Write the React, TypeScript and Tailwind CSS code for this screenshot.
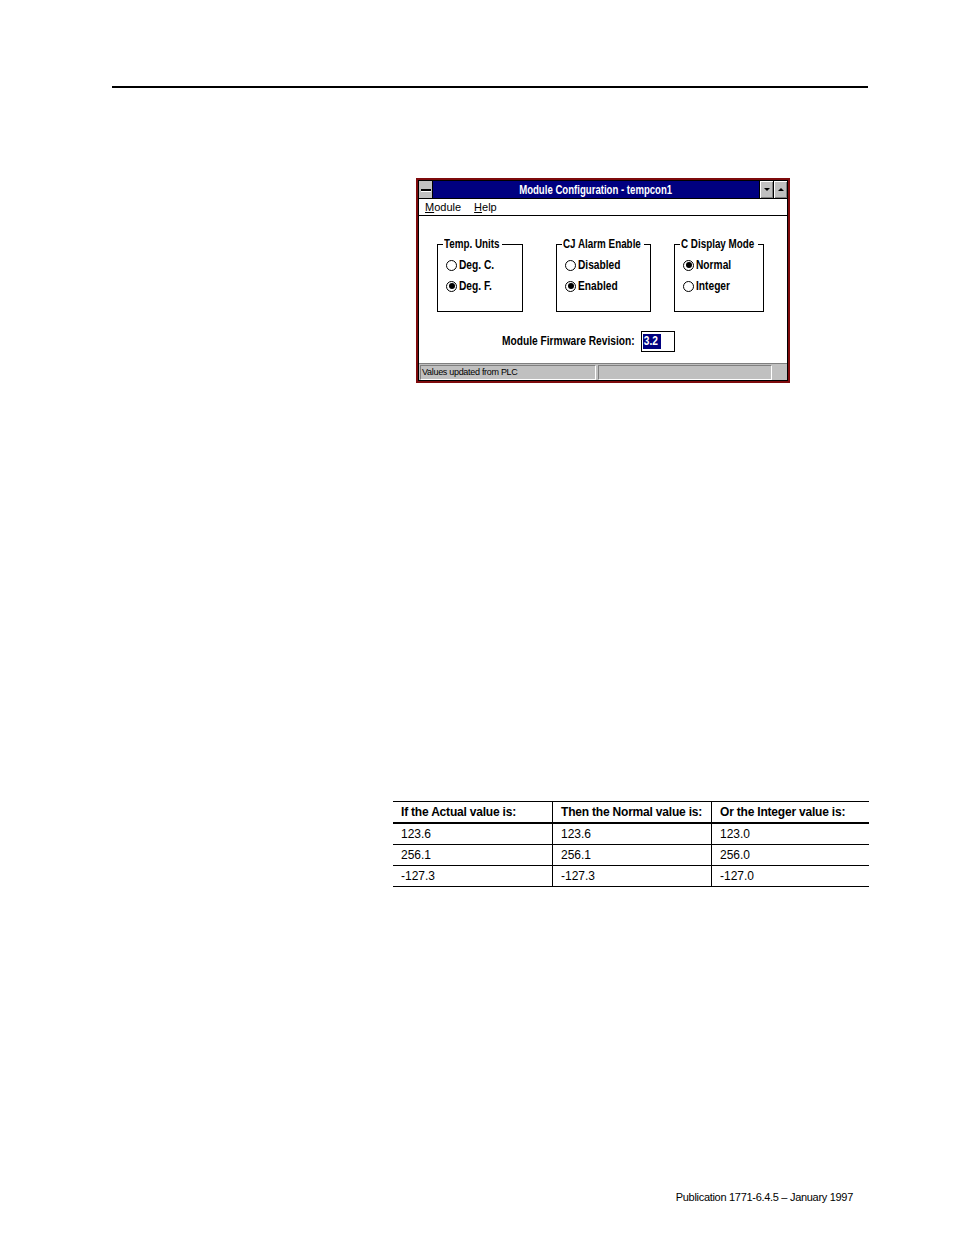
import React from "react";

const sans = "font-['Liberation_Sans',Arial,sans-serif]";

function Radio({ checked }: { checked?: boolean }) {
  return (
    <span className="flex h-[11px] w-[11px] shrink-0 items-center justify-center rounded-full border border-black bg-white">
      {checked && <span className="h-[6px] w-[6px] rounded-full bg-black" />}
    </span>
  );
}

interface GroupProps {
  title: string;
  titleWidth: string;
  options: { label: string; checked?: boolean }[];
  width: string;
}

function GroupBox({ title, titleWidth, options, width }: GroupProps) {
  return (
    <div className={`relative h-[68px] border-x border-b border-black ${width}`}>
      {/* top edge with the caption set into it */}
      <div className="absolute -left-px -right-px -top-[7px] flex h-[14px] items-center text-[12px] leading-[14px]">
        <span className="h-px w-[6px] bg-black" />
        <span className={`mx-[1px] h-[14px] whitespace-nowrap ${titleWidth}`}>
          <span className="inline-block origin-left scale-x-[0.82] align-top font-bold">{title}</span>
        </span>
        <span className="h-px flex-1 bg-black" />
      </div>
      <div className="flex flex-col gap-[7px] pl-[8px] pt-[14px] text-[12px] leading-[14px]">
        {options.map((o) => (
          <div key={o.label} className="flex h-[14px] items-center gap-[2px]">
            <Radio checked={o.checked} />
            <span className="inline-block origin-left scale-x-[0.85] whitespace-nowrap font-bold">{o.label}</span>
          </div>
        ))}
      </div>
    </div>
  );
}

function CaptionButton({ up }: { up?: boolean }) {
  return (
    <div className="flex w-[14px] items-center justify-center border-l border-black bg-[#c0c0c0] shadow-[inset_1px_1px_0_#fff,inset_-1px_-1px_0_#808080]">
      {up ? (
        <span className="h-0 w-0 border-x-[3px] border-b-[3px] border-x-transparent border-b-black" />
      ) : (
        <span className="h-0 w-0 border-x-[3px] border-t-[3px] border-x-transparent border-t-black" />
      )}
    </div>
  );
}

function ConfigWindow() {
  return (
    <div className={`ml-[416px] w-[374px] bg-[#7e0a0c] p-[2px] ${sans}`}>
      <div className="border border-black">
        {/* title bar */}
        <div className="flex h-[18px] items-stretch border-b border-black bg-[#000080]">
          <div className="flex w-[14px] items-center justify-center border-r border-black bg-[#c0c0c0]">
            <span className="h-[2px] w-[10px] bg-black shadow-[0_1px_0_#fff]" />
          </div>
          <div className="flex flex-1 items-center justify-center overflow-hidden">
            <span className="inline-block scale-x-[0.8] whitespace-nowrap text-[12px] font-bold leading-none text-white">
              Module Configuration - tempcon1
            </span>
          </div>
          <CaptionButton />
          <CaptionButton up />
        </div>
        {/* menu bar */}
        <div className="flex h-[17px] items-center gap-[13px] border-b border-black bg-white pl-[6px] text-[11px] leading-none">
          <span>
            <span className="underline">M</span>odule
          </span>
          <span>
            <span className="underline">H</span>elp
          </span>
        </div>
        {/* client area */}
        <div className="h-[147px] bg-white pt-[28px]">
          <div className="flex pl-[18px]">
            <GroupBox
              title="Temp. Units"
              titleWidth="w-[57px]"
              width="w-[86px]"
              options={[{ label: "Deg. C." }, { label: "Deg. F.", checked: true }]}
            />
            <div className="ml-[33px]">
              <GroupBox
                title="CJ Alarm Enable"
                titleWidth="w-[80px]"
                width="w-[95px]"
                options={[{ label: "Disabled" }, { label: "Enabled", checked: true }]}
              />
            </div>
            <div className="ml-[23px]">
              <GroupBox
                title="C Display Mode"
                titleWidth="w-[76px]"
                width="w-[90px]"
                options={[{ label: "Normal", checked: true }, { label: "Integer" }]}
              />
            </div>
          </div>
          <div className="mt-[19px] flex items-center pl-[83px] text-[12px] leading-[15px]">
            <span className="h-[15px] w-[133px] whitespace-nowrap">
              <span className="inline-block origin-left scale-x-[0.85] align-top font-bold">Module Firmware Revision:</span>
            </span>
            <div className="ml-[6px] flex h-[21px] w-[34px] items-center border border-black bg-white pl-[1px]">
              <span className="h-[15px] w-[18px] bg-[#000080] text-white">
                <span className="inline-block origin-left scale-x-[0.85] pl-[1px] align-top font-bold">3.2</span>
              </span>
            </div>
          </div>
        </div>
        {/* status bar */}
        <div className="flex h-[17px] gap-[2px] border-t border-[#808080] bg-[#c0c0c0] px-[1px] pt-[1px]">
          <div className="flex h-[15px] w-[176px] items-center border border-b-white border-l-[#808080] border-r-white border-t-[#808080] pl-[1px] text-[9px] leading-none tracking-[-0.3px]">
            Values updated from PLC
          </div>
          <div className="h-[15px] w-[174px] border border-b-white border-l-[#808080] border-r-white border-t-[#808080]" />
        </div>
      </div>
    </div>
  );
}

const rows = [
  ["123.6", "123.6", "123.0"],
  ["256.1", "256.1", "256.0"],
  ["-127.3", "-127.3", "-127.0"],
];

const headers = ["If the Actual value is:", "Then the Normal value is:", "Or the Integer value is:"];

function ValueTable() {
  return (
    <div className={`ml-[393px] w-[476px] text-[12px] leading-none ${sans}`}>
      <div className="grid h-[23px] grid-cols-[159px_159px_1fr] border-b-2 border-t border-black">
        {headers.map((h, i) => (
          <div
            key={h}
            className={`flex items-center whitespace-nowrap pl-[8px] font-bold tracking-[-0.2px] ${i > 0 ? "border-l border-black" : ""}`}
          >
            {h}
          </div>
        ))}
      </div>
      {rows.map((r) => (
        <div key={r[0]} className="grid h-[21px] grid-cols-[159px_159px_1fr] border-b border-black">
          {r.map((c, i) => (
            <div key={i} className={`flex items-center pl-[8px] ${i > 0 ? "border-l border-black" : ""}`}>
              {c}
            </div>
          ))}
        </div>
      ))}
    </div>
  );
}

export default function App() {
  return (
    <div className="h-[1235px] w-[954px] bg-white pt-[86px] text-black">
      <div className="ml-[112px] h-[2px] w-[756px] bg-black" />
      <div className="mt-[90px]">
        <ConfigWindow />
      </div>
      <div className="mt-[418px]">
        <ValueTable />
      </div>
      <div className={`mt-[304px] pr-[101px] text-right text-[11px] leading-[13px] tracking-[-0.3px] ${sans}`}>
        Publication 1771-6.4.5 – January 1997
      </div>
    </div>
  );
}
